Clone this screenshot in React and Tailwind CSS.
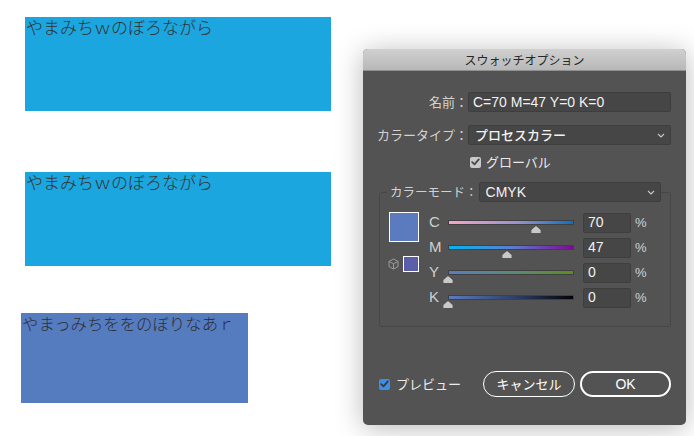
import React from "react";

const JP = { fontFamily: '"Noto Sans CJK JP", "Noto Sans", sans-serif' };
const LAT = { fontFamily: '"Liberation Sans", "Noto Sans CJK JP", sans-serif' };

function Chevron() {
  return (
    <svg width="8" height="5" viewBox="0 0 8 5" className="shrink-0">
      <path d="M1 1 L4 4 L7 1" fill="none" stroke="#c8c8c8" strokeWidth="1.1" />
    </svg>
  );
}

function Check({ color }) {
  return (
    <svg width="9" height="8" viewBox="0 0 9 8">
      <path d="M1.2 4.2 L3.5 6.4 L7.8 1.4" fill="none" stroke={color} strokeWidth="1.8" strokeLinecap="round" strokeLinejoin="round" />
    </svg>
  );
}

function Thumb() {
  return (
    <svg width="10" height="7" viewBox="0 0 10 7">
      <path d="M5 0.3 Q5.6 0.3 6.2 1 L9.6 4 L9.6 7 L0.4 7 L0.4 4 L3.8 1 Q4.4 0.3 5 0.3 Z" fill="#c9c9c9" />
    </svg>
  );
}

const rows = [
  { l: "C", v: "70", pct: 70, g: "bg-[linear-gradient(to_right,#f4a6c9,#9a92cb_55%,#0a6fc4)]" },
  { l: "M", v: "47", pct: 47, g: "bg-[linear-gradient(to_right,#00b6f0,#5a7fcf_50%,#7e0a93)]" },
  { l: "Y", v: "0", pct: 0, g: "bg-[linear-gradient(to_right,#5a7cc2,#5a8a72_55%,#5f8a23)]" },
  { l: "K", v: "0", pct: 0, g: "bg-[linear-gradient(to_right,#5a7cc2,#2c3d66_55%,#030308)]" },
];

export default function App() {
  return (
    <div className="w-[694px] h-[436px] bg-white flex overflow-hidden">
      {/* left canvas */}
      <div className="w-[363px] shrink-0 flex flex-col font-light" style={JP}>
        <div className="ml-[25px] mt-[17px] w-[306px] h-[94px] bg-[#1ca6df] text-[#34302c] text-[17px] leading-[20px] pl-[1px]">
          やまみちｗのぼろながら
        </div>
        <div className="ml-[25px] mt-[61px] w-[306px] h-[94px] bg-[#1ca6df] text-[#34302c] text-[17px] leading-[20px] pl-[1px]">
          やまみちｗのぼろながら
        </div>
        <div className="ml-[21px] mt-[47px] w-[227px] h-[90px] bg-[#557cbf] text-[#2e2e34] text-[16.4px] leading-[20px] pl-[1px]">
          やまっみちををのぼりなあｒ
        </div>
      </div>

      {/* dialog */}
      <div className="mt-[49px] w-[323px] h-[376px] shrink-0 rounded-[5px] overflow-hidden bg-[#535353] flex flex-col shadow-[0_3px_28px_rgba(0,0,0,0.28)]">
        <div className="h-[22px] shrink-0 bg-[linear-gradient(to_bottom,#d0d0d0,#b8b8b8)] flex items-center justify-center text-[12px] text-[#262626] border-b border-[#8f8f8f]" style={JP}>
          スウォッチオプション
        </div>

        {/* name */}
        <div className="flex items-center mt-[21px] mr-[15px]">
          <div className="w-[105px] text-right text-[13px] text-[#d2d2d2]" style={JP}>名前：</div>
          <div className="flex-1 h-[20px] bg-[#464646] border border-[#3e3e3e] rounded-[2px] flex items-center pl-[4px] text-[14px] text-[#f2f2f2]" style={LAT}>
            C=70 M=47 Y=0 K=0
          </div>
        </div>

        {/* type */}
        <div className="flex items-center mt-[13px] mr-[15px]">
          <div className="w-[105px] text-right text-[13px] text-[#d2d2d2]" style={JP}>カラータイプ：</div>
          <div className="flex-1 h-[20px] bg-[#464646] border border-[#3e3e3e] rounded-[2px] flex items-center justify-between pl-[6px] pr-[5px] text-[13px] text-[#f2f2f2] font-medium" style={JP}>
            <span>プロセスカラー</span>
            <Chevron />
          </div>
        </div>

        {/* global */}
        <div className="flex items-center mt-[11px] ml-[107px] h-[12px]">
          <div className="w-[11px] h-[11px] rounded-[2px] bg-[#c9c9c9] flex items-center justify-center">
            <Check color="#4a4a4a" />
          </div>
          <span className="ml-[5px] text-[13px] text-[#e8e8e8]" style={JP}>グローバル</span>
        </div>

        {/* group */}
        <div className="mt-[24px] ml-[16px] mr-[15px] border border-[#474747] rounded-[3px] pb-[16px]">
          <div className="-mt-[11px] ml-[7px] mr-[9px] flex items-center h-[20px]">
            <span className="bg-[#535353] pl-[3px] pr-[1px] text-[12.5px] text-[#d2d2d2] leading-[20px]" style={JP}>カラーモード：</span>
            <div className="flex-1 h-[20px] bg-[#464646] border border-[#3e3e3e] rounded-[2px] flex items-center justify-between pl-[6px] pr-[5px] text-[14px] text-[#f2f2f2] font-medium" style={LAT}>
              <span>CMYK</span>
              <Chevron />
            </div>
          </div>

          <div className="flex mt-[8px] ml-[9px]">
            <div className="flex flex-col items-end w-[30px] mt-[2px]">
              <div className="w-[30px] h-[30px] bg-[#5b7bbe] border-[1.5px] border-white" />
              <div className="flex items-center mt-[14px]">
                <svg width="11" height="12" viewBox="0 0 11 12" className="mr-[4px]">
                  <path d="M5.5 1 L10 3.4 L10 8.6 L5.5 11 L1 8.6 L1 3.4 Z M1 3.4 L5.5 5.8 L10 3.4 M5.5 5.8 L5.5 11" fill="none" stroke="#9a9a9a" strokeWidth="1" strokeLinejoin="round" />
                </svg>
                <div className="w-[16px] h-[16px] bg-[#5a5ea8] border-[1.5px] border-white" />
              </div>
            </div>
            <div className="flex flex-col ml-[10px]">
              {rows.map((r) => (
                <div key={r.l} className="flex items-center h-[25px]">
                  <div className="w-[19px] text-[15px] text-[#cfcfcf]" style={LAT}>{r.l}</div>
                  <div className="relative w-[126px] h-[25px] flex items-center">
                    <div className={`w-full h-[5px] border border-[#404040] ${r.g}`} />
                    <div className="absolute top-[16px]" style={{ left: `calc(${r.pct}% - 5px)` }}>
                      <Thumb />
                    </div>
                  </div>
                  <div className="ml-[9px] w-[48px] h-[20px] bg-[#464646] border border-[#3e3e3e] rounded-[2px] flex items-center pl-[4px] text-[14px] text-[#f2f2f2]" style={LAT}>
                    {r.v}
                  </div>
                  <div className="ml-[4px] text-[13px] text-[#d2d2d2]" style={LAT}>%</div>
                </div>
              ))}
            </div>
          </div>
        </div>

        {/* bottom */}
        <div className="flex items-center mt-[44px] ml-[16px] mr-[15px]">
          <div className="w-[11px] h-[11px] rounded-[2px] bg-[#3d8ee8] flex items-center justify-center">
            <Check color="#3a3a3a" />
          </div>
          <span className="ml-[6px] text-[13px] text-[#ececec]" style={JP}>プレビュー</span>
          <div className="flex-1" />
          <button className="w-[92px] h-[26px] rounded-full border-[1.5px] border-white text-[13px] text-white flex items-center justify-center" style={JP}>
            キャンセル
          </button>
          <button className="ml-[5px] w-[91px] h-[26px] rounded-full border-2 border-white text-[14px] text-white flex items-center justify-center" style={LAT}>
            OK
          </button>
        </div>
      </div>
    </div>
  );
}
